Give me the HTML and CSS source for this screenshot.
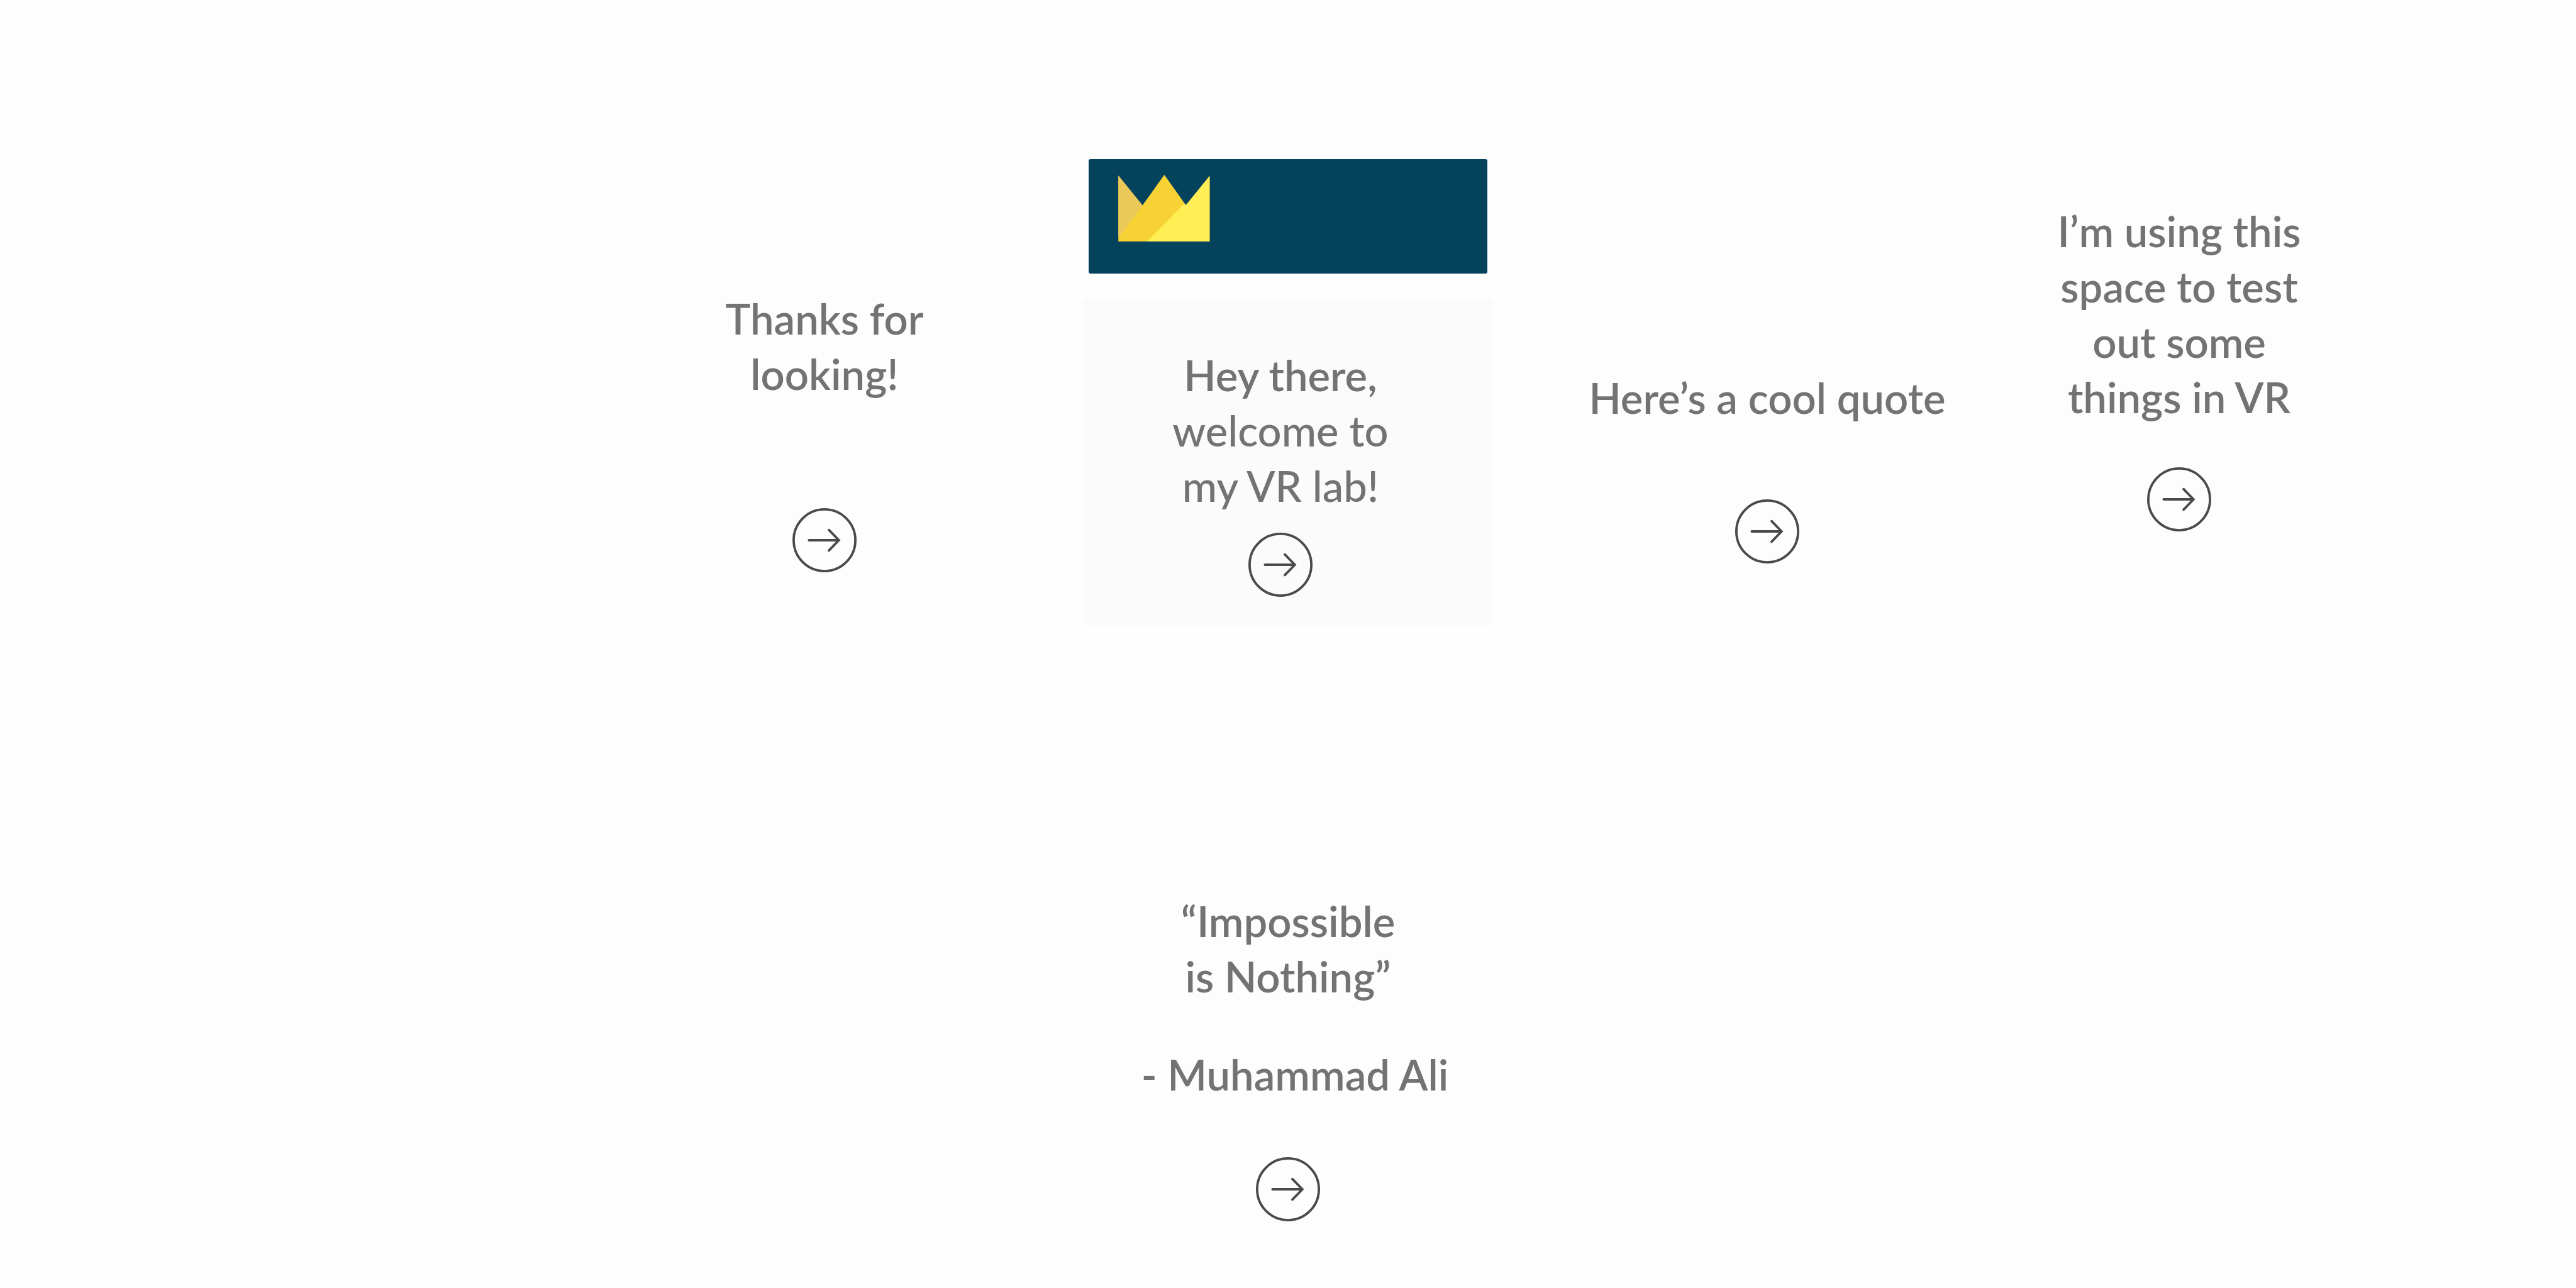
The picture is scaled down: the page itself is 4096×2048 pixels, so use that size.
FILE: index.html
```html
<!DOCTYPE html>
<html lang="en">
<head>
<meta charset="utf-8">
<title>VR lab</title>
<link rel="stylesheet" href="styles.css">
</head>
<body>
<svg class="symbols" aria-hidden="true">
  <symbol id="arrow" viewBox="0 0 150 150">
    <circle cx="75" cy="75" r="72.2"/>
    <path d="M38.8 75H108M85.3 51L108.6 75L85.3 99"/>
  </symbol>
</svg>
<main class="board">
  <section class="card thanks">
    <p class="message">Thanks for<br>looking!</p>
    <button class="next" type="button" aria-label="Next"><svg><use href="#arrow"/></svg></button>
  </section>

  <div class="intro">
    <header class="banner">
      <svg class="crown" viewBox="0 0 214 156" role="img" aria-label="Crown">
        <path fill="#f7d234" d="M0 2L56.5 71.5L107.5 0L158 71L213.5 2.5V156H0Z"/>
        <path fill="#ebc85a" d="M0 2L56.5 71.5L0 147Z"/>
        <path fill="#ffee55" d="M213.5 2.5V156H67L154.5 67L158 71Z"/>
      </svg>
    </header>
    <section class="card welcome">
      <p class="message light"><strong>Hey there,</strong><br>welcome to<br>my VR lab!</p>
      <button class="next" type="button" aria-label="Next"><svg><use href="#arrow"/></svg></button>
    </section>
  </div>

  <section class="card teaser">
    <p class="message">Here’s a cool quote</p>
    <button class="next" type="button" aria-label="Next"><svg><use href="#arrow"/></svg></button>
  </section>

  <section class="card about">
    <p class="message">I’m using this<br>space to test<br>out some<br>things in VR</p>
    <button class="next" type="button" aria-label="Next"><svg><use href="#arrow"/></svg></button>
  </section>

  <section class="card quote">
    <p class="message">“Impossible<br>is Nothing”</p>
    <p class="message author">- Muhammad Ali</p>
    <button class="next" type="button" aria-label="Next"><svg><use href="#arrow"/></svg></button>
  </section>
</main>
</body>
</html>
```
FILE: styles.css
```css
* {
  box-sizing: border-box;
}

body {
  margin: 0;
  background: #fefefe;
  color: #737373;
  font-family: Lato, sans-serif;
}

.symbols {
  display: none;
}

.board {
  display: grid;
  grid-template-columns: 985fr 652fr 85fr 652fr 110fr 652fr 3fr 652fr 305fr;
  align-items: start;
  row-gap: 340px;
  padding: 239px 0 59px;
}

.card {
  display: flex;
  flex-direction: column;
  align-items: center;
  min-height: 653px;
  padding: 84px 0 47px;
  background: #fdfdfd;
}

.thanks {
  grid-column: 2;
  margin-top: 65px;
  padding-top: 158px;
}

.intro {
  grid-column: 4;
  margin-top: 14px;
}

.banner {
  height: 182px;
  margin: 0 9px 40px;
  padding: 25px 47px;
  border-radius: 3px;
  background: #05435d;
}

.crown {
  display: block;
  width: 146px;
  height: 106px;
}

.welcome {
  min-height: 521px;
  padding: 77px 24px 47px 0;
  background: #fbfbfb;
}

.teaser {
  grid-column: 6;
  margin-top: 51px;
  padding-top: 298px;
}

.about {
  grid-column: 8;
}

.quote {
  grid-column: 4;
  grid-row: 2;
}

.message {
  margin: 0;
  font-size: 67px;
  font-weight: 600;
  line-height: 88px;
  text-align: center;
  white-space: nowrap;
}

.light {
  font-weight: 500;
}

.light strong {
  font-weight: 600;
}

.author {
  margin-top: 68px;
  padding-left: 22px;
}

.next {
  width: 102px;
  height: 102px;
  margin-top: auto;
  padding: 0;
  border: 0;
  background: none;
  cursor: pointer;
}

.next svg {
  display: block;
  width: 100%;
  height: 100%;
  fill: none;
  stroke: #4a4a4a;
  stroke-width: 5.6;
  stroke-linecap: round;
}
```
